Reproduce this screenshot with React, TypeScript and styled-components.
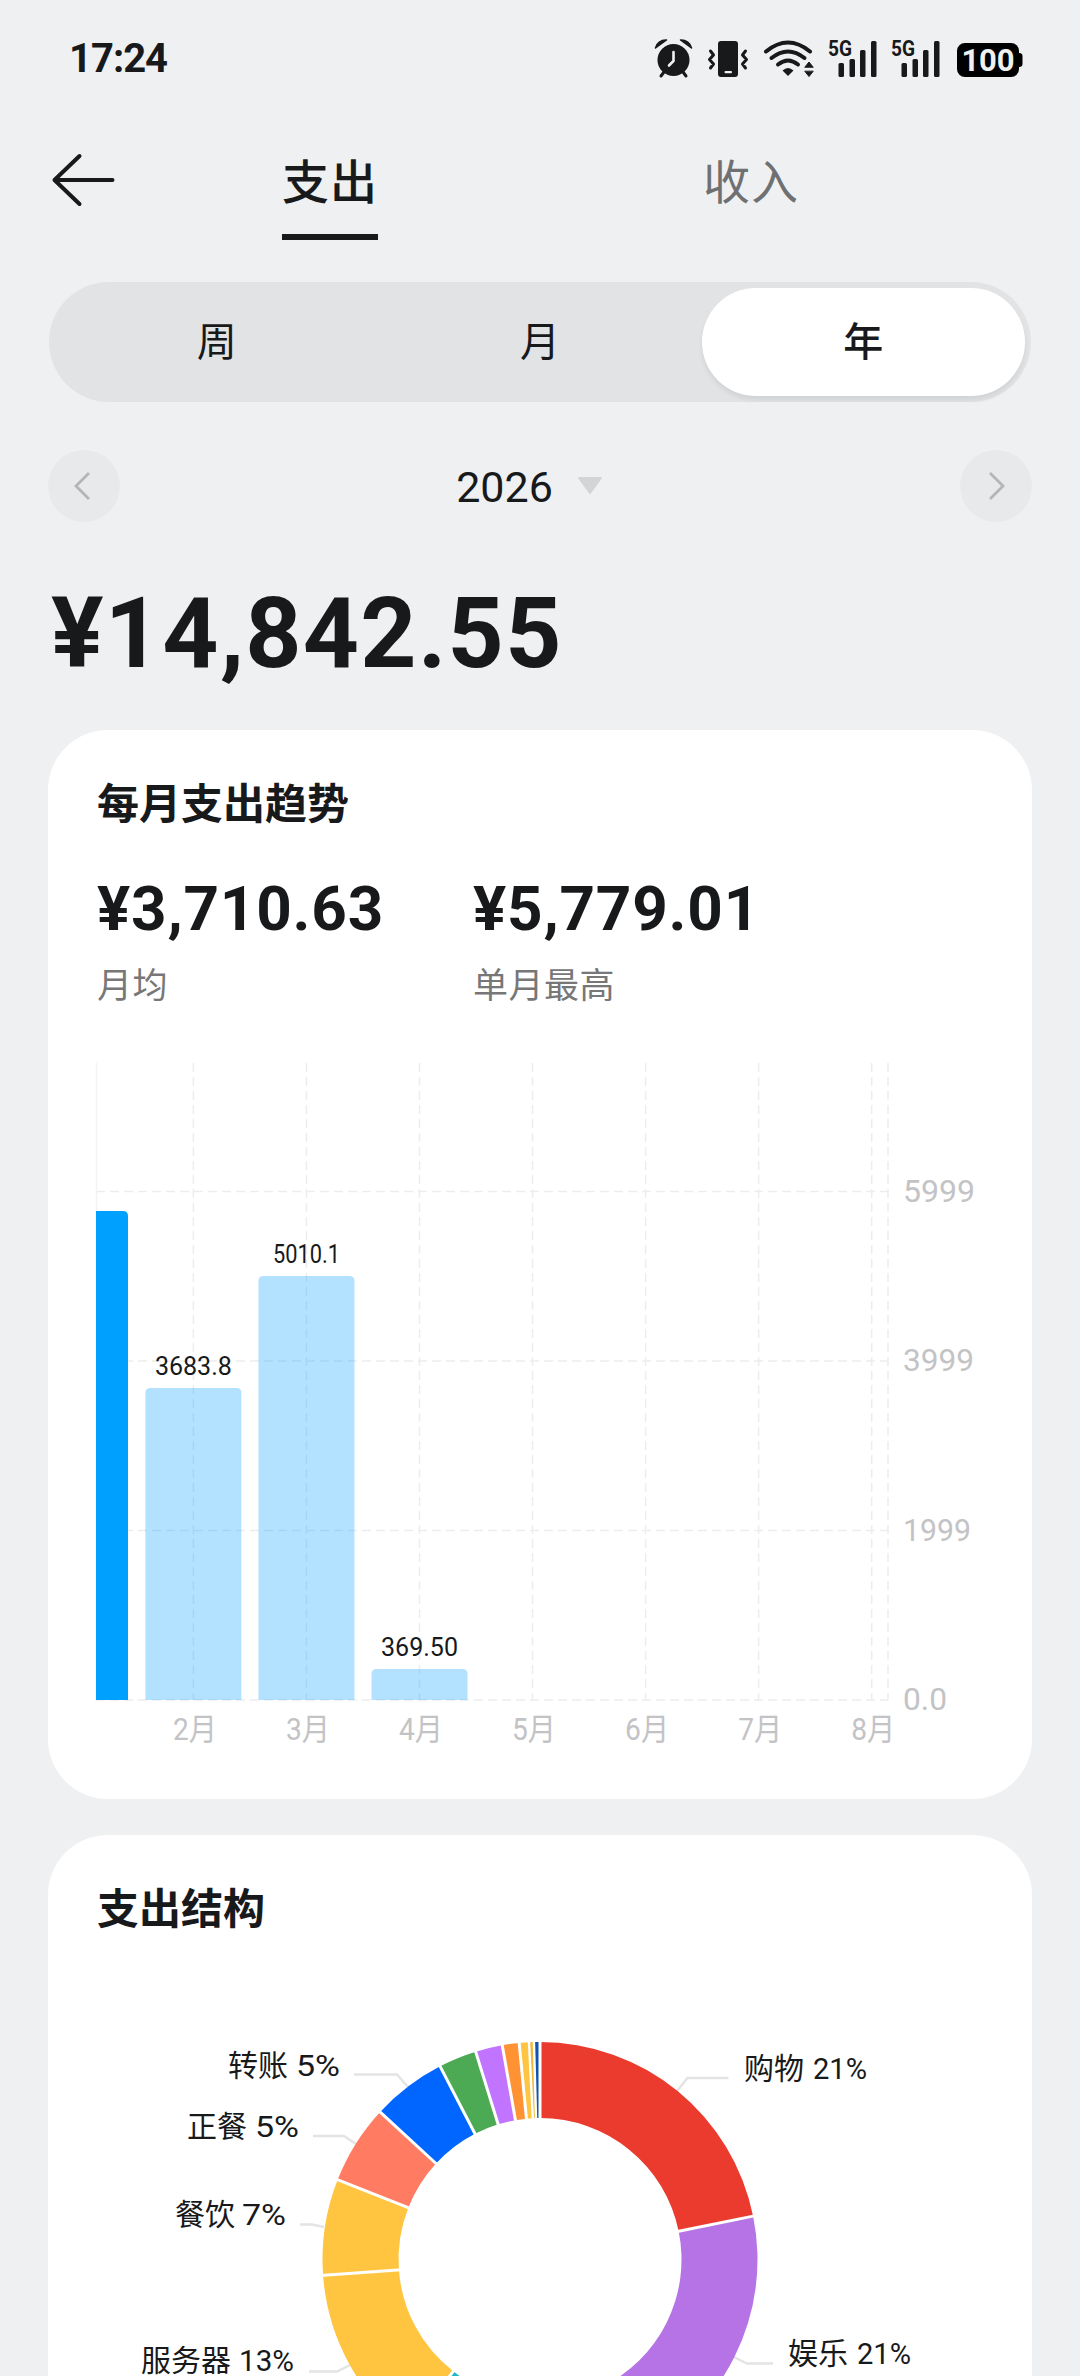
import React from "react";
import styled, { createGlobalStyle } from "styled-components";

const latin = `Roboto, "Noto Sans CJK SC", sans-serif`;
const cjk = `"Noto Sans CJK SC", Roboto, sans-serif`;
const ink = "#18191b";

const Global = createGlobalStyle`
  * { box-sizing: border-box; }
  body { margin: 0; background: #eff0f2; }
`;

const Screen = styled.main`
  width: 1080px;
  height: 2376px;
  overflow: hidden;
  background: #eff0f2;
  color: ${ink};
  font-family: ${latin};
  display: flex;
  flex-direction: column;
`;

const StatusBar = styled.header`
  height: 120px;
  flex: none;
  display: flex;
  justify-content: space-between;
  padding: 34px 56px 0 69px;
`;

const Clock = styled.time`
  font-size: 40px;
  line-height: 50px;
  font-weight: 700;
  letter-spacing: -1px;
`;

const StatusIcons = styled.svg`
  display: block;
  width: 380px;
  height: 50px;
`;

const TabBar = styled.nav`
  height: 120px;
  flex: none;
  display: flex;
  align-items: flex-start;
`;

const BackButton = styled.button`
  width: 96px;
  height: 60px;
  margin: 30px 0 0 36px;
  padding: 0;
  border: 0;
  background: none;
`;

const Tab = styled.button<{ $active?: boolean; $left: number }>`
  width: 96px;
  height: 120px;
  margin-left: ${(p) => p.$left}px;
  padding: 24px 0 0;
  border: 0;
  border-bottom: 6px solid ${(p) => (p.$active ? ink : "transparent")};
  background: none;
  color: ${(p) => (p.$active ? ink : "#6f7072")};
  font: ${(p) => (p.$active ? 500 : 400)} 47px/70px ${cjk};
  letter-spacing: 1px;
  white-space: nowrap;
  display: flex;
`;

const Segmented = styled.div`
  flex: none;
  height: 120px;
  margin: 42px 49px 0;
  padding: 6px;
  border-radius: 60px;
  background: #e2e3e5;
  display: grid;
  grid-template-columns: repeat(3, 1fr);
`;

const Segment = styled.button<{ $active?: boolean }>`
  border: 0;
  padding: 0 0 6px;
  border-radius: 54px;
  background: ${(p) => (p.$active ? "#fff" : "none")};
  box-shadow: ${(p) => (p.$active ? "0 4px 5px rgba(0,0,0,0.07)" : "none")};
  color: ${ink};
  font: ${(p) => (p.$active ? 500 : 400)} 40px/60px ${cjk};
`;

const YearRow = styled.div`
  flex: none;
  height: 72px;
  margin: 48px 48px 0;
  display: flex;
  align-items: center;
  justify-content: space-between;
`;

const RoundButton = styled.button`
  width: 72px;
  height: 72px;
  padding: 0;
  border: 0;
  border-radius: 50%;
  background: #e8e9eb;
`;

const YearPicker = styled.div`
  display: flex;
  align-items: center;
  gap: 24px;
  padding-right: 21px;
  font-size: 43px;
  line-height: 60px;
`;

const YearText = styled.span`
  padding-top: 2px;
`;

const Total = styled.h1`
  flex: none;
  margin: 51px 0 0 51px;
  height: 157px;
  font-size: 98px;
  line-height: 122px;
  font-weight: 700;
  letter-spacing: 1.3px;
`;

const Card = styled.section<{ $height: number }>`
  flex: none;
  height: ${(p) => p.$height}px;
  margin: 0 48px 36px;
  padding: 42px 0 0;
  border-radius: 60px;
  background: #fff;
`;

const CardTitle = styled.h2`
  margin: -1px 0 0 49px;
  height: 61px;
  font: 700 42px/60px ${cjk};
`;

const Stats = styled.dl`
  margin: 37px 0 41px 49px;
  height: 150px;
  display: grid;
  grid-template-columns: 376px 376px;
`;

const Stat = styled.div`
  display: flex;
  flex-direction: column;
`;

const StatValue = styled.dd`
  margin: 0;
  font-size: 62px;
  line-height: 80px;
  font-weight: 700;
  letter-spacing: 0.8px;
`;

const StatLabel = styled.dt`
  margin-top: 12px;
  color: #777;
  font: 400 35px/44px ${cjk};
  letter-spacing: 0.5px;
`;

const Chart = styled.svg`
  display: block;
  width: 984px;
  overflow: visible;
`;

const Value = styled.text`
  font: 400 25.5px ${latin};
  fill: ${ink};
`;

const Axis = styled.text`
  font: 400 31px ${latin};
  fill: #c3c3c5;
`;

const SliceLabel = styled.text`
  font: 400 30px ${latin};
  fill: ${ink};
`;

const Signal = ({ x }: { x: number }) => (
  <g transform={`translate(${x} 0)`}>
    <text x="-1" y="22" fontSize="22" fontWeight="700" fontFamily={latin} textLength="24" lengthAdjust="spacingAndGlyphs">5G</text>
    <rect x="9.500" y="29" width="5.500" height="14" rx="1.500" />
    <rect x="20.500" y="25" width="5.500" height="18" rx="1.500" />
    <rect x="31" y="16" width="5.500" height="27" rx="1.500" />
    <rect x="42" y="7" width="5.500" height="36" rx="1.500" />
  </g>
);

const Status = () => (
  <StatusIcons viewBox="0 0 380 50" fill={ink}>
    <g>
      <circle cx="29.500" cy="26" r="16" />
      <path d="M11.500 14a10.500 9.500 0 0 1 11-8z M47.500 14a10.500 9.500 0 0 0-11-8z" stroke={ink} strokeWidth="1.500" strokeLinejoin="round" />
      <path d="M20 38l-3 4M39 38l3 4" stroke={ink} strokeWidth="3" strokeLinecap="round" />
      <path d="M29.500 18v9l-4.500 4.500" fill="none" stroke="#eff0f2" strokeWidth="2.600" strokeLinecap="round" />
    </g>
    <g>
      <rect x="74" y="7" width="20" height="36" rx="3" />
      <rect x="80.500" y="37" width="7.500" height="2.300" rx="1" fill="#eff0f2" />
      <path d="M66.500 17l3 4-4 4.500 4 4.500-3 4M101.500 17l-3 4 4 4.500-4 4.500 3 4" fill="none" stroke={ink} strokeWidth="3" strokeLinecap="round" strokeLinejoin="round" />
    </g>
    <g fill="none" stroke={ink} strokeWidth="4" strokeLinecap="round">
      <path d="M122 17.500q22-18 44 0" />
      <path d="M127.500 24q16.500-13 33 0" />
      <path d="M134 30.500q10-8 20 0" />
      <path d="M138.500 36.500q5.500-5 11 0l-5.500 5.500z" fill={ink} stroke="none" />
      <path d="M161 33l4-5 4 5zM161 37.500l4 5 4-5z" fill={ink} strokeWidth="1" />
    </g>
    <Signal x={185} />
    <Signal x={248} />
    <rect x="313" y="9" width="62" height="34" rx="8" fill="#000" />
    <path d="M375 19q3.500 0 3.500 3v8q0 3-3.500 3z" fill="#000" />
    <text x="344" y="37" fill="#eff0f2" fontSize="31" fontWeight="700" fontFamily={latin} textAnchor="middle" textLength="53" lengthAdjust="spacing">100</text>
  </StatusIcons>
);

const months = ["2月", "3月", "4月", "5月", "6月", "7月", "8月"];
const monthX = (i: number) => 145.4 + i * 113.05;
const levels = [
  { y: 131.500, label: "5999", w: 72 },
  { y: 301, label: "3999", w: 71 },
  { y: 470.500, label: "1999", w: 68 },
  { y: 640, label: "0.0", w: 44 },
];
const bars = [
  { i: 0, top: 328, label: "3683.8", w: 77 },
  { i: 1, top: 216, label: "5010.1", w: 67 },
  { i: 2, top: 609, label: "369.50", w: 77 },
];

const barPath = (x0: number, x1: number, top: number) =>
  `M${x0} 640V${top + 5}q0-5 5-5H${x1 - 5}q5 0 5 5V640z`;

const TrendChart = () => (
  <Chart viewBox="0 0 984 720" height="720">
    <g stroke="#ededee" strokeWidth="1.500" strokeDasharray="9 5" fill="none">
      {levels.map((l) => <path key={l.label} d={`M48 ${l.y}H840`} />)}
      {months.map((m, i) => <path key={m} d={`M${monthX(i)} 3V640`} />)}
      <path d="M840 3V640" />
      <path d="M48.500 3V640" strokeDasharray="none" stroke="#f3f3f4" />
    </g>
    <path d="M48 151h27q5 0 5 5V640H48z" fill="#00a0ff" />
    {bars.map((b) => (
      <g key={b.label}>
        <path d={barPath(monthX(b.i) - 48, monthX(b.i) + 48, b.top)} fill="#00a0ff" fillOpacity="0.3" />
        <Value x={monthX(b.i)} y={b.top - 13} textAnchor="middle" textLength={b.w} lengthAdjust="spacingAndGlyphs">{b.label}</Value>
      </g>
    ))}
    {months.map((m, i) => (
      <Axis key={m} x={monthX(i) + 1.5} y="680" textAnchor="middle" textLength="44" lengthAdjust="spacingAndGlyphs">{m}</Axis>
    ))}
    {levels.map((l) => <Axis key={l.label} x="855" y={l.y + 10} textLength={l.w} lengthAdjust="spacingAndGlyphs">{l.label}</Axis>)}
  </Chart>
);

const slices = [
  { from: 0, to: 78.5, color: "#eb3b2f" },
  { from: 78.5, to: 154.5, color: "#b673e5" },
  { from: 154.5, to: 217.8, color: "#1fb8c1" },
  { from: 217.8, to: 265.8, color: "#ffc440" },
  { from: 265.8, to: 291.5, color: "#ffc440" },
  { from: 291.5, to: 312.7, color: "#ff7c62" },
  { from: 312.7, to: 332.65, color: "#0066ff" },
  { from: 332.65, to: 342.8, color: "#4caa55" },
  { from: 342.8, to: 350, color: "#c074ff" },
  { from: 350, to: 354.5, color: "#ff9233" },
  { from: 354.5, to: 357.1, color: "#ffc440" },
  { from: 357.1, to: 358.4, color: "#f0b93c" },
  { from: 358.4, to: 359.9, color: "#1254ad" },
];

const cx = 492;
const cy = 322.500;
const point = (deg: number, r: number) => {
  const a = (deg * Math.PI) / 180;
  return `${(cx + r * Math.sin(a)).toFixed(2)} ${(cy - r * Math.cos(a)).toFixed(2)}`;
};
const slicePath = (from: number, to: number) =>
  `M${point(from, 217.5)}A217.5 217.5 0 0 1 ${point(to, 217.5)}L${point(to, 141.5)}A141.5 141.5 0 0 0 ${point(from, 141.5)}z`;

const callouts = [
  { name: "购物", share: "21%", x: 696, y: 141.500, gap: 69, w: 54, line: "M629 154L639.500 141H680.500" },
  { name: "娱乐", share: "21%", x: 740, y: 427, gap: 69, w: 54, line: "M686 420L699 426.500H725" },
  { name: "转账", share: "5%", x: 180, y: 138.500, gap: 68, w: 44, line: "M306 137.500H349L360 150" },
  { name: "正餐", share: "5%", x: 139, y: 199.500, gap: 68, w: 44, line: "M265 199H296L308 207" },
  { name: "餐饮", share: "7%", x: 127, y: 288, gap: 67, w: 44, line: "M252 287.500H264L276 290" },
  { name: "服务器", share: "13%", x: 93, y: 434, gap: 98, w: 55, line: "M261 434.500H289L302 428" },
];

const StructureChart = () => (
  <Chart viewBox="0 0 984 560" height="560">
    {callouts.map((c) => (
      <g key={c.name}>
        <path d={c.line} fill="none" stroke="#e4e4e5" strokeWidth="2.500" />
        <SliceLabel x={c.x} y={c.y}>
          {c.name}
          <tspan x={c.x + c.gap} textLength={c.w} lengthAdjust="spacingAndGlyphs">{c.share}</tspan>
        </SliceLabel>
      </g>
    ))}
    {slices.map((s) => <path key={s.from} d={slicePath(s.from, s.to)} fill={s.color} />)}
    {slices.map((s) => (
      <path key={s.from} d={`M${point(s.from, 139)}L${point(s.from, 220)}`} stroke="#fff" strokeWidth={s.from > 355 ? 2.4 : 3} />
    ))}
  </Chart>
);

const Chevron = ({ flip }: { flip?: boolean }) => (
  <svg width="72" height="72" viewBox="0 0 72 72" fill="none" stroke="#b4b5b7" strokeWidth="2.800">
    <path d={flip ? "M30 23l13 13L30 49" : "M41 23L28 36 41 49"} />
  </svg>
);

export default function App() {
  return (
    <Screen>
      <Global />
      <StatusBar>
        <Clock>17:24</Clock>
        <Status />
      </StatusBar>
      <TabBar>
        <BackButton aria-label="返回">
          <svg width="96" height="60" viewBox="0 0 96 60" fill="none" stroke={ink} strokeWidth="4" strokeLinecap="round" strokeLinejoin="round">
            <path d="M43.500 6L18.500 30l25 24M18.500 30H76.500" />
          </svg>
        </BackButton>
        <Tab $active $left={150}>支出</Tab>
        <Tab $left={325}>收入</Tab>
      </TabBar>
      <Segmented>
        <Segment>周</Segment>
        <Segment>月</Segment>
        <Segment $active>年</Segment>
      </Segmented>
      <YearRow>
        <RoundButton aria-label="上一年"><Chevron /></RoundButton>
        <YearPicker>
          <YearText>2026</YearText>
          <svg width="26" height="18" viewBox="0 0 26 18"><path d="M2 1h22L13 16z" fill="#d3d4d6" stroke="#d3d4d6" strokeWidth="2" strokeLinejoin="round" /></svg>
        </YearPicker>
        <RoundButton aria-label="下一年"><Chevron flip /></RoundButton>
      </YearRow>
      <Total>¥14,842.55</Total>
      <Card $height={1069}>
        <CardTitle>每月支出趋势</CardTitle>
        <Stats>
          <Stat>
            <StatValue>¥3,710.63</StatValue>
            <StatLabel>月均</StatLabel>
          </Stat>
          <Stat>
            <StatValue>¥5,779.01</StatValue>
            <StatLabel>单月最高</StatLabel>
          </Stat>
        </Stats>
        <TrendChart />
      </Card>
      <Card $height={700}>
        <CardTitle>支出结构</CardTitle>
        <StructureChart />
      </Card>
    </Screen>
  );
}
